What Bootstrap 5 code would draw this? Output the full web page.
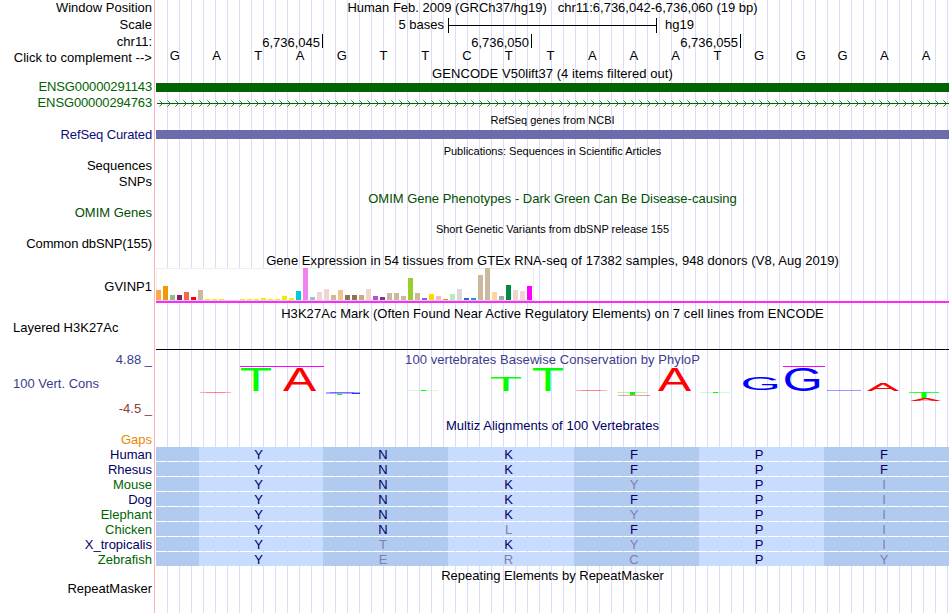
<!DOCTYPE html>
<html lang="en">
<head>
  <meta charset="UTF-8" />
  <title>Human chr11:6,736,042-6,736,060 – Genome Browser</title>
  <meta name="viewport" content="width=device-width, initial-scale=1" />
  <link href="https://cdn.jsdelivr.net/npm/bootstrap@5.3.0/dist/css/bootstrap.min.css" rel="stylesheet" />
  <style>
    body {
      font-family: "Liberation Sans", Arial, sans-serif;
      font-size: 13px;
      color: #000;
      background: #fff;
      overflow: hidden;
    }
    /* guide lines every 12px, plus the pink divider after the labels */
    .browser {
      width: 949px;
      height: 613px;
      background:
        linear-gradient(#ffb4b4, #ffb4b4) 154px 0 / 1px 100% no-repeat,
        repeating-linear-gradient(to right, #dcdcf8 0 1px, transparent 1px 12px) 167px 0 / 782px 100% no-repeat;
    }
    .track { height: 16px; line-height: 16px; white-space: nowrap; }
    .track-label { width: 156px; padding-right: 4px; text-align: right; flex: none; }
    .track-label.start { text-align: left; padding-left: 13px; }
    .track-data { width: 793px; flex: none; }
    .h-13 { height: 13px; }
    .h-15 { height: 15px; line-height: 15px; }
    .h-17 { height: 17px; line-height: 17px; }
    .h-18 { height: 18px; line-height: 18px; }
    .h-gtex { height: 35px; line-height: 37px; }
    .h-h3k { height: 30px; line-height: 15px; }
    .h-logo { height: 50px; }
    .lh-12 { line-height: 12px; }
    .lh-18 { line-height: 18px; }
    .lh-20 { line-height: 20px; }
    .lh-22 { line-height: 22px; }
    .wide { letter-spacing: .06px; }
    .tight { letter-spacing: -.13px; }
    .fine { font-size: 11px; }
    .gene { color: #006400; }
    .refseq { color: #0c0c78; }
    .omim { color: #005000; }
    .phylo { color: #3c3c8c; }
    .phylo-min { color: #8c3c3c; }
    .gaps { color: #e68a00; }
    .navy { color: #000064; }
    .bar { height: 9px; }
    .bar-gene { background: #006400; }
    .bar-refseq { background: #6c6cac; }
    .scale-name { width: 292px; padding-right: 4px; text-align: right; }
    .scale-bar { width: 209px; height: 15px; border: solid #000; border-width: 0 1px; }
    .scale-bar div { height: 1px; background: #000; width: 100%; }
    .tick { width: 209px; height: 14px; line-height: 17px; padding-right: 2px; text-align: right; border-right: 1px solid #000; }
    .tick:first-child { width: 167px; }
    .base { flex: 1 1 0; text-align: center; padding-right: 4px; line-height: 14px; }
    .baseline { border-bottom: 1px solid #000; }
    .logo-name { height: 32px; line-height: 32px; }
    .logo-min { height: 18px; line-height: 18px; }
    .codon { height: 14px; line-height: 15px; text-align: center; background: #c8dcff; color: #000064; padding-right: 5px; }
    .codon:nth-child(even) { background: #b0caf0; }
    .codon.diff { color: #8080b0; }
    svg { display: block; overflow: visible !important; }
  </style>
</head>
<body>

  <div class="browser">
    <!-- Position and ruler -->
    <div class="track d-flex">
      <div class="track-label">Window Position</div>
      <div class="track-data text-center">Human Feb. 2009 (GRCh37/hg19) &nbsp; chr11:6,736,042-6,736,060 (19 bp)</div>
    </div>
    <div class="track h-18 d-flex">
      <div class="track-label">Scale</div>
      <div class="track-data d-flex align-items-center">
        <div class="scale-name">5 bases</div>
        <div class="scale-bar d-flex align-items-center"><div></div></div>
        <div class="ps-2 ms-0">hg19</div>
      </div>
    </div>
    <div class="track h-15 d-flex">
      <div class="track-label">chr11:</div>
      <div class="track-data d-flex">
        <div class="tick">6,736,045</div>
        <div class="tick">6,736,050</div>
        <div class="tick">6,736,055</div>
      </div>
    </div>
    <div class="track h-17 d-flex">
      <div class="track-label wide">Click to complement --&gt;</div>
      <div class="track-data d-flex" id="bases"></div>
    </div>

    <!-- GENCODE -->
    <div class="track h-13 d-flex">
      <div class="track-label"></div>
      <div class="track-data text-center wide">GENCODE V50lift37 (4 items filtered out)</div>
    </div>
    <div class="track d-flex align-items-center gene">
      <div class="track-label tight">ENSG00000291143</div>
      <div class="track-data bar bar-gene"></div>
    </div>
    <div class="track d-flex align-items-center gene">
      <div class="track-label tight">ENSG00000294763</div>
      <svg class="track-data" height="16" id="strand"></svg>
    </div>

    <!-- RefSeq -->
    <div class="track lh-18 d-flex">
      <div class="track-label"></div>
      <div class="track-data text-center fine">RefSeq genes from NCBI</div>
    </div>
    <div class="track h-15 d-flex align-items-center refseq">
      <div class="track-label tight">RefSeq Curated</div>
      <div class="track-data bar bar-refseq"></div>
    </div>

    <!-- Publications, OMIM, dbSNP -->
    <div class="track lh-18 d-flex">
      <div class="track-label"></div>
      <div class="track-data text-center fine">Publications: Sequences in Scientific Articles</div>
    </div>
    <div class="track d-flex"><div class="track-label">Sequences</div></div>
    <div class="track d-flex"><div class="track-label">SNPs</div></div>
    <div class="track h-15 lh-18 d-flex omim">
      <div class="track-label"></div>
      <div class="track-data text-center">OMIM Gene Phenotypes - Dark Green Can Be Disease-causing</div>
    </div>
    <div class="track h-15 d-flex omim"><div class="track-label">OMIM Genes</div></div>
    <div class="track lh-18 d-flex">
      <div class="track-label"></div>
      <div class="track-data text-center fine">Short Genetic Variants from dbSNP release 155</div>
    </div>
    <div class="track h-15 d-flex"><div class="track-label tight">Common dbSNP(155)</div></div>

    <!-- GTEx -->
    <div class="track h-17 lh-20 d-flex">
      <div class="track-label"></div>
      <div class="track-data text-center wide">Gene Expression in 54 tissues from GTEx RNA-seq of 17382 samples, 948 donors (V8, Aug 2019)</div>
    </div>
    <div class="track h-gtex d-flex">
      <div class="track-label">GVINP1</div>
      <svg class="track-data" height="35" id="gtex" shape-rendering="crispEdges"></svg>
    </div>

    <!-- H3K27Ac -->
    <div class="track h-17 lh-22 d-flex">
      <div class="track-label"></div>
      <div class="track-data text-center wide">H3K27Ac Mark (Often Found Near Active Regulatory Elements) on 7 cell lines from ENCODE</div>
    </div>
    <div class="track h-h3k d-flex">
      <div class="track-label start">Layered H3K27Ac</div>
      <div class="track-data baseline"></div>
    </div>

    <!-- Conservation -->
    <div class="track h-18 lh-20 d-flex phylo">
      <div class="track-label">4.88 _</div>
      <div class="track-data text-center wide">100 vertebrates Basewise Conservation by PhyloP</div>
    </div>
    <div class="track h-logo d-flex phylo">
      <div class="d-flex flex-column">
        <div class="track-label start logo-name">100 Vert. Cons</div>
        <div class="track-label phylo-min logo-min">-4.5 _</div>
      </div>
      <svg class="track-data" height="50" id="logo"></svg>
    </div>

    <!-- Multiz -->
    <div class="track d-flex navy">
      <div class="track-label"></div>
      <div class="track-data text-center wide">Multiz Alignments of 100 Vertebrates</div>
    </div>
    <div class="track h-13 lh-12 d-flex gaps"><div class="track-label">Gaps</div></div>
    <div id="multiz"></div>

    <!-- RepeatMasker -->
    <div class="track lh-18 d-flex">
      <div class="track-label"></div>
      <div class="track-data text-center">Repeating Elements by RepeatMasker</div>
    </div>
    <div class="track h-15 lh-12 d-flex"><div class="track-label">RepeatMasker</div></div>
  </div>

  <script src="https://cdn.jsdelivr.net/npm/bootstrap@5.3.0/dist/js/bootstrap.bundle.min.js"></script>
  <script>
    document.getElementById("bases").innerHTML =
      [..."GATAGTTCTTAAATGGGAA"].map(b => `<div class="base">${b}</div>`).join("");

    // strand arrows, one every 8px
    let arrows = `<path d="M1 8.5H793" stroke="#006400"/>`;
    for (let x = 4; x < 790; x += 8) {
      arrows += `<path d="M${x - 0.5} 5.5l3 3l-3 3" fill="none" stroke="#006400" stroke-width=".8"/>`;
    }
    document.getElementById("strand").innerHTML = arrows;

    // GTEx tissues: colour and bar height
    const tissues = [
      ["#ffa54f", 10], ["#ee9a00", 14], ["#8fbc8f", 5], ["#8b1c62", 5], ["#ee6a50", 8], ["#ff0000", 3],
      ["#cdb79e", 10], ["#eeee00", 1], ["#eeee00", 1], ["#eeee00", 1], ["#eeee00", 0], ["#eeee00", 0],
      ["#eeee00", 1], ["#eeee00", 1], ["#eeee00", 1], ["#eeee00", 2], ["#eeee00", 1], ["#eeee00", 1],
      ["#eeee00", 4], ["#eeee00", 2], ["#00cdcd", 9], ["#ee82ee", 32], ["#9ac0cd", 3], ["#eed5d2", 8],
      ["#eed5d2", 11], ["#cdb79e", 5], ["#eec591", 10], ["#8b7355", 5], ["#8b7355", 5], ["#cdaa7d", 5],
      ["#eed5d2", 11], ["#b452cd", 4], ["#7a378b", 3], ["#cdb79e", 7], ["#cdb79e", 7], ["#cdb79e", 4],
      ["#9acd32", 22], ["#cdb79e", 7], ["#7a67ee", 2], ["#ffd700", 6], ["#ffb6c1", 4], ["#cd9b1d", 1],
      ["#b4eeb4", 6], ["#d9d9d9", 11], ["#3a5fcd", 2], ["#1e90ff", 2], ["#cdb79e", 25], ["#cdb79e", 32],
      ["#ffd39b", 8], ["#a6a6a6", 4], ["#008b45", 15], ["#eed5d2", 10], ["#eed5d2", 9], ["#ff00ff", 14]
    ];
    document.getElementById("gtex").innerHTML =
      `<rect x=".5" y=".5" width="377" height="32" fill="#fff" stroke="#eee"/>` +
      `<rect y="32" width="378" height="1" fill="#d8d8d8"/>` +
      tissues.map(([c, h], i) => `<rect x="${i * 7}" y="${32 - h}" width="5" height="${h}" fill="${c}"/>`).join("") +
      `<rect y="33" width="793" height="2" fill="#ff28ff"/>`;

    // conservation logo: each letter is stretched to fill x, y, w, h
    const glyph = {
      A: [0.2, 66.5, 0, 68.8, "#ff0000"],
      G: [5, 72.3, -1, 69.8, "#0000ff"],
      T: [2.2, 58.8, 0, 68.8, "#00ff00"]
    };
    const letters = [
      ["T", 85, 0, 30, 23], ["A", 127, 0, 33, 23],
      ["T", 335, 9, 30, 14], ["T", 377, 0, 30, 23],
      ["A", 502, 0, 33, 23], ["G", 587, 9, 35, 13], ["G", 629, 0, 35, 23],
      ["A", 711, 15, 32, 8], ["T", 753, 24, 30, 6], ["A", 754, 30, 31, 3]
    ];
    // scores near zero flatten to slivers: x, y, w, h, colour, opacity
    const slivers = [
      [44, 24, 31, 1, "#ff0000", .3], [50, 24, 19, 1, "#ff0000", .25],
      [170, 24, 34, 2, "#0000ff", .35], [174, 24, 24, 1, "#0000ff", .3], [196, 25, 8, 1, "#0000ff", .7],
      [181, 26, 5, 1, "#00ff00", 1],
      [252, 22, 30, 1, "#00ff00", .2], [265, 22, 5, 1, "#00ff00", 1],
      [420, 22, 31, 1, "#ff0000", .3], [426, 22, 19, 1, "#ff0000", .25],
      [461, 24, 30, 1, "#00ff00", .35], [474, 24, 5, 3, "#00ff00", 1], [462, 27, 32, 1, "#ff0000", .4],
      [544, 24, 30, 1, "#00ff00", .2], [557, 24, 5, 1, "#00ff00", 1],
      [671, 22, 34, 1, "#0000ff", .4]
    ];
    document.getElementById("logo").innerHTML =
      `<path d="M84 -1.5H168M627 -1.5H669" stroke="#ff00ff"/>` +
      slivers.map(([x, y, w, h, c, o]) =>
        `<rect x="${x}" y="${y}" width="${w}" height="${h}" fill="${c}" opacity="${o}"/>`).join("") +
      letters.map(([ch, x, y, w, h]) => {
        const [x0, x1, y0, y1, fill] = glyph[ch];
        const sx = w / (x1 - x0), sy = h / (y1 - y0);
        return `<text font-size="100" fill="${fill}" transform="translate(${x - x0 * sx} ${y + y1 * sy}) scale(${sx} ${sy})">${ch}</text>`;
      }).join("");

    // Multiz rows; lower case marks an amino acid that differs from human
    const widths = [43, 124, 125, 126, 125, 125, 125];
    const species = [
      ["Human", "YNKFPF", "navy"], ["Rhesus", "YNKFPF", "navy"], ["Mouse", "YNKyPi", "gene"],
      ["Dog", "YNKFPi", "navy"], ["Elephant", "YNKyPi", "gene"], ["Chicken", "YNlFPi", "gene"],
      ["X_tropicalis", "YtKyPi", "navy"], ["Zebrafish", "YercPy", "gene"]
    ];
    document.getElementById("multiz").innerHTML = species.map(([name, aa, cls]) =>
      `<div class="track h-15 d-flex"><div class="track-label ${cls}">${name}</div>` +
      widths.map((w, i) => {
        const c = aa[i - 1] || "";
        return `<div class="codon${c !== c.toUpperCase() ? " diff" : ""}" style="width:${w}px">${c.toUpperCase()}</div>`;
      }).join("") + `</div>`).join("");
  </script>

</body>
</html>
